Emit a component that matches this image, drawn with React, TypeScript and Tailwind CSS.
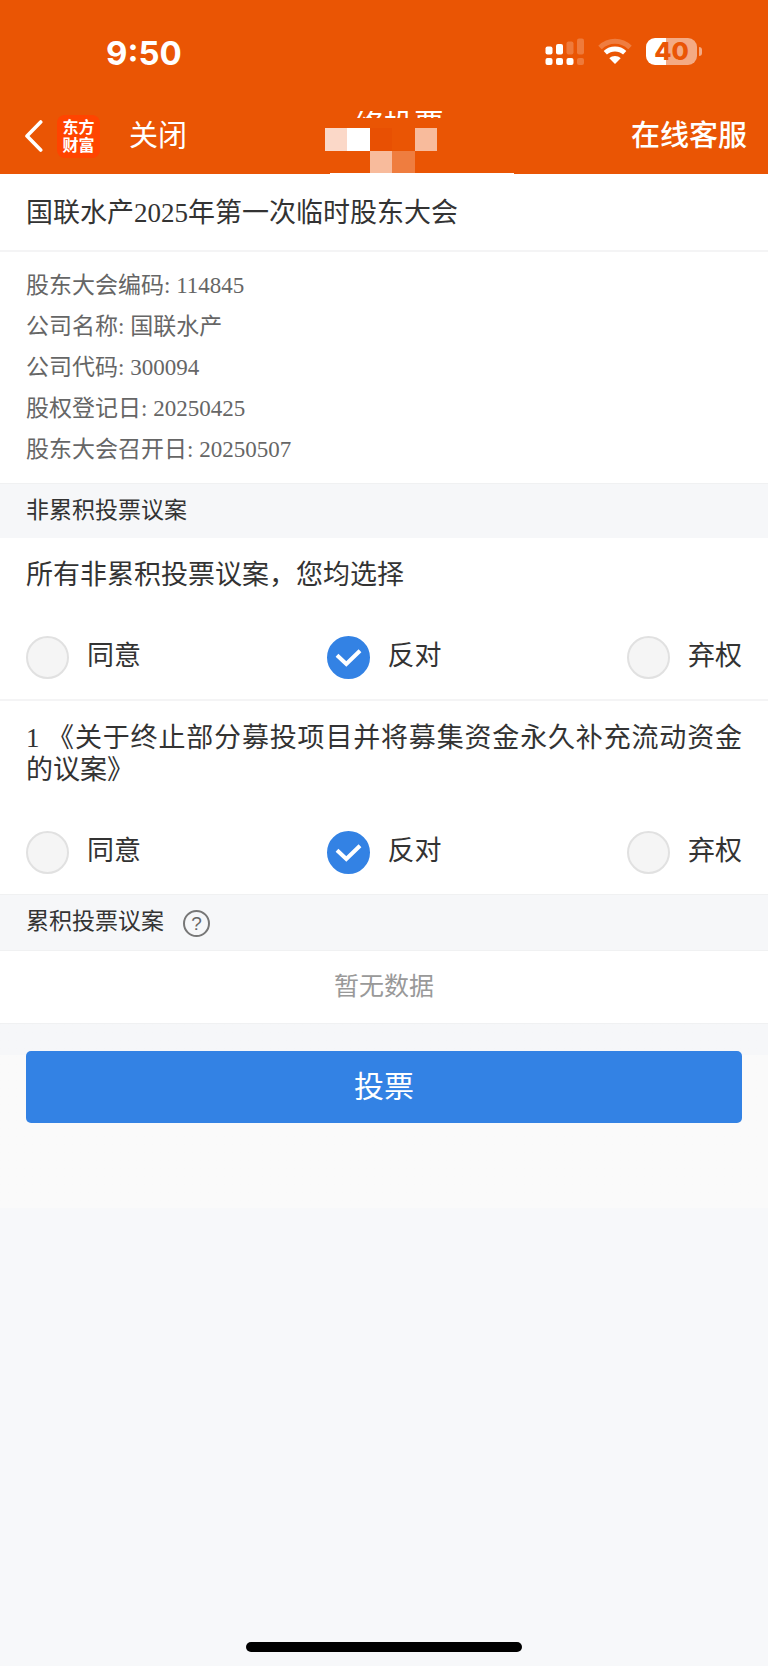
import { useState } from "react";

const details = [
  ["股东大会编码", "114845"],
  ["公司名称", "国联水产"],
  ["公司代码", "300094"],
  ["股权登记日", "20250425"],
  ["股东大会召开日", "20250507"],
];

const options = ["同意", "反对", "弃权"];

function SignalIcon() {
  return (
    <svg width="39" height="28" viewBox="0 0 39 28" fill="#fff" aria-hidden="true">
      <rect x="0.5" y="8.5" width="7" height="8" rx="2" />
      <rect x="11" y="6" width="7" height="10.5" rx="2" />
      <rect x="21.5" y="3.5" width="7" height="13" rx="2" opacity="0.22" />
      <rect x="32" y="0.5" width="7" height="16" rx="2" opacity="0.22" />
      <rect x="0.5" y="20" width="7" height="7" rx="2" />
      <rect x="11" y="20" width="7" height="7" rx="2" />
      <rect x="21.5" y="20" width="7" height="7" rx="2" />
      <rect x="32" y="20" width="7" height="7" rx="2" opacity="0.22" />
    </svg>
  );
}

function WifiIcon() {
  return (
    <svg width="34" height="28" viewBox="0 0 34 28" fill="none" aria-hidden="true">
      <path d="M2 9.5C10.5 1.2 23.5 1.2 32 9.5" stroke="#fff" strokeOpacity="0.24" strokeWidth="5" />
      <path d="M7.3 14.8C12.8 9.7 21.2 9.7 26.7 14.8" stroke="#fff" strokeWidth="4.8" />
      <path d="M17 26L11.3 20.3C14.4 17.3 19.6 17.3 22.7 20.3Z" fill="#fff" />
    </svg>
  );
}

function Battery() {
  return (
    <div className="flex items-center gap-0.5">
      <div className="flex h-[27px] w-[51px] items-center justify-center rounded-[9px] bg-linear-to-r from-white from-40% to-[#f4aa84] to-40% text-[25px] leading-none font-extrabold text-[#ea5504]">
        40
      </div>
      <div className="h-[9px] w-[3px] rounded-r-full bg-[#f4aa84]" />
    </div>
  );
}

function VoteOptions({ name, label }: { name: string; label: string }) {
  const [value, setValue] = useState("反对");
  return (
    <div role="radiogroup" aria-label={label} className="flex items-center justify-between">
      {options.map((option) => (
        <label key={option} className="flex items-center gap-[18px]">
          <span className="relative block size-[43px]">
            <input
              type="radio"
              name={name}
              value={option}
              checked={value === option}
              onChange={() => setValue(option)}
              className="peer block size-[43px] appearance-none rounded-full border-2 border-[#e1e1e1] bg-[#f5f5f5] checked:border-[#3382e4] checked:bg-[#3382e4]"
            />
            <svg
              viewBox="0 0 43 43"
              className="pointer-events-none absolute inset-0 hidden peer-checked:block"
              fill="none"
              stroke="#fff"
              strokeWidth="4"
              aria-hidden="true"
            >
              <path d="M10 19.3L19.3 28L33 14.8" />
            </svg>
          </span>
          <span className="pb-1 leading-[32px]">{option}</span>
        </label>
      ))}
    </div>
  );
}

export default function App() {
  return (
    <div className="flex min-h-screen flex-col bg-[#f7f8fa] font-['Liberation_Serif','Noto_Sans_CJK_SC',sans-serif] text-[27px] text-[#333]">
      <header className="bg-[#ea5504] font-['Inter','Noto_Sans_CJK_SC',sans-serif] text-white">
        <div className="flex h-[98px] items-center justify-between pt-[5px] pr-[66px] pl-[106px]">
          <time className="pt-1 text-[33px] font-bold">9:50</time>
          <div className="flex items-center gap-[14px]">
            <SignalIcon />
            <WifiIcon />
            <Battery />
          </div>
        </div>
        <nav className="relative flex h-[76px] items-center justify-between pr-[21px] pl-6 text-[29px]">
          <div className="flex items-center">
            <button type="button" aria-label="返回" className="flex items-center gap-[14px]">
              <svg width="19" height="34" viewBox="0 0 19 34" fill="none" stroke="#fff" strokeWidth="3.6" strokeLinecap="round" strokeLinejoin="round" aria-hidden="true">
                <path d="M16.7 3L3 17L16.7 31" />
              </svg>
              <span className="flex size-[43px] flex-col items-center justify-center rounded-lg bg-[#ff4400] text-[16px] leading-[18px] font-bold">
                <span>东方</span>
                <span>财富</span>
              </span>
            </button>
            <button type="button" className="ml-[29px]">关闭</button>
          </div>
          <a href="#service" className="font-medium">在线客服</a>
          <div className="absolute bottom-0 left-[325px] flex w-[189px] flex-col">
            <h1 className="ml-[29px] h-[7px] overflow-hidden text-[30px] leading-[26px]">络投票</h1>
            <div className="mt-[10px] grid w-[112px] grid-cols-5" aria-hidden="true">
              <i className="h-[23px] bg-[#fbd8c8]" />
              <i className="bg-white" />
              <i className="bg-[#e85003]" />
              <i />
              <i className="bg-[#f8bb9c]" />
              <i />
              <i />
              <i className="h-[22px] bg-[#f8bb9c]" />
              <i className="bg-[#ef7d3f]" />
              <i />
            </div>
            <div className="ml-[5px] h-px bg-white" />
          </div>
        </nav>
      </header>

      <main>
        <section className="bg-white">
          <h2 className="border-b-2 border-[#f4f4f5] px-[26px] pt-[22px] pb-5 leading-[34px]">
            国联水产2025年第一次临时股东大会
          </h2>
          <div className="px-[26px] py-[13px] text-[23px] leading-[41px] text-[#666]">
            {details.map(([term, detail]) => (
              <p key={term}>
                {term}: {detail}
              </p>
            ))}
          </div>
        </section>

        <h3 className="border-t border-[#f0f1f2] bg-[#f6f7f9] px-[26px] py-[10px] text-[23px] leading-[34px]">
          非累积投票议案
        </h3>

        <section className="border-b-2 border-[#f4f4f5] bg-white px-[26px] pt-[21px] pb-5">
          <p className="mb-[45px] leading-[32px]">所有非累积投票议案，您均选择</p>
          <VoteOptions name="all" label="所有非累积投票议案" />
        </section>

        <section className="bg-white px-[26px] pt-[21px] pb-5">
          <p className="mb-[45px] text-justify leading-[32px]">
            1 《关于终止部分募投项目并将募集资金永久补充流动资金的议案》
          </p>
          <VoteOptions name="proposal-1" label="议案 1" />
        </section>

        <div className="flex items-center gap-[19px] border-y border-[#f0f1f2] bg-[#f6f7f9] px-[26px] pt-[10px] pb-[9px] text-[23px]">
          <h3 className="pb-[2px] leading-[34px]">累积投票议案</h3>
          <button
            type="button"
            aria-label="累积投票说明"
            className="flex size-[27px] items-center justify-center rounded-full border-2 border-[#777] font-['Liberation_Sans',sans-serif] text-[19px] leading-none text-[#666]"
          >
            ?
          </button>
        </div>

        <p className="bg-white py-[19px] text-center text-[25px] leading-[34px] text-[#999]">
          暂无数据
        </p>

        <div className="border-t border-[#f0f1f2] bg-linear-to-b from-[#f6f7f9] from-[31px] to-[#fafafa] to-[31px] px-[26px] pt-[27px] pb-[85px]">
          <button type="button" className="h-[72px] w-full rounded-[5px] bg-[#3382e4] pb-[2px] text-[30px] text-white">
            投票
          </button>
        </div>
      </main>

      <div className="mt-auto flex justify-center pb-[14px]">
        <div className="h-[10px] w-[276px] rounded-full bg-black" />
      </div>
    </div>
  );
}
